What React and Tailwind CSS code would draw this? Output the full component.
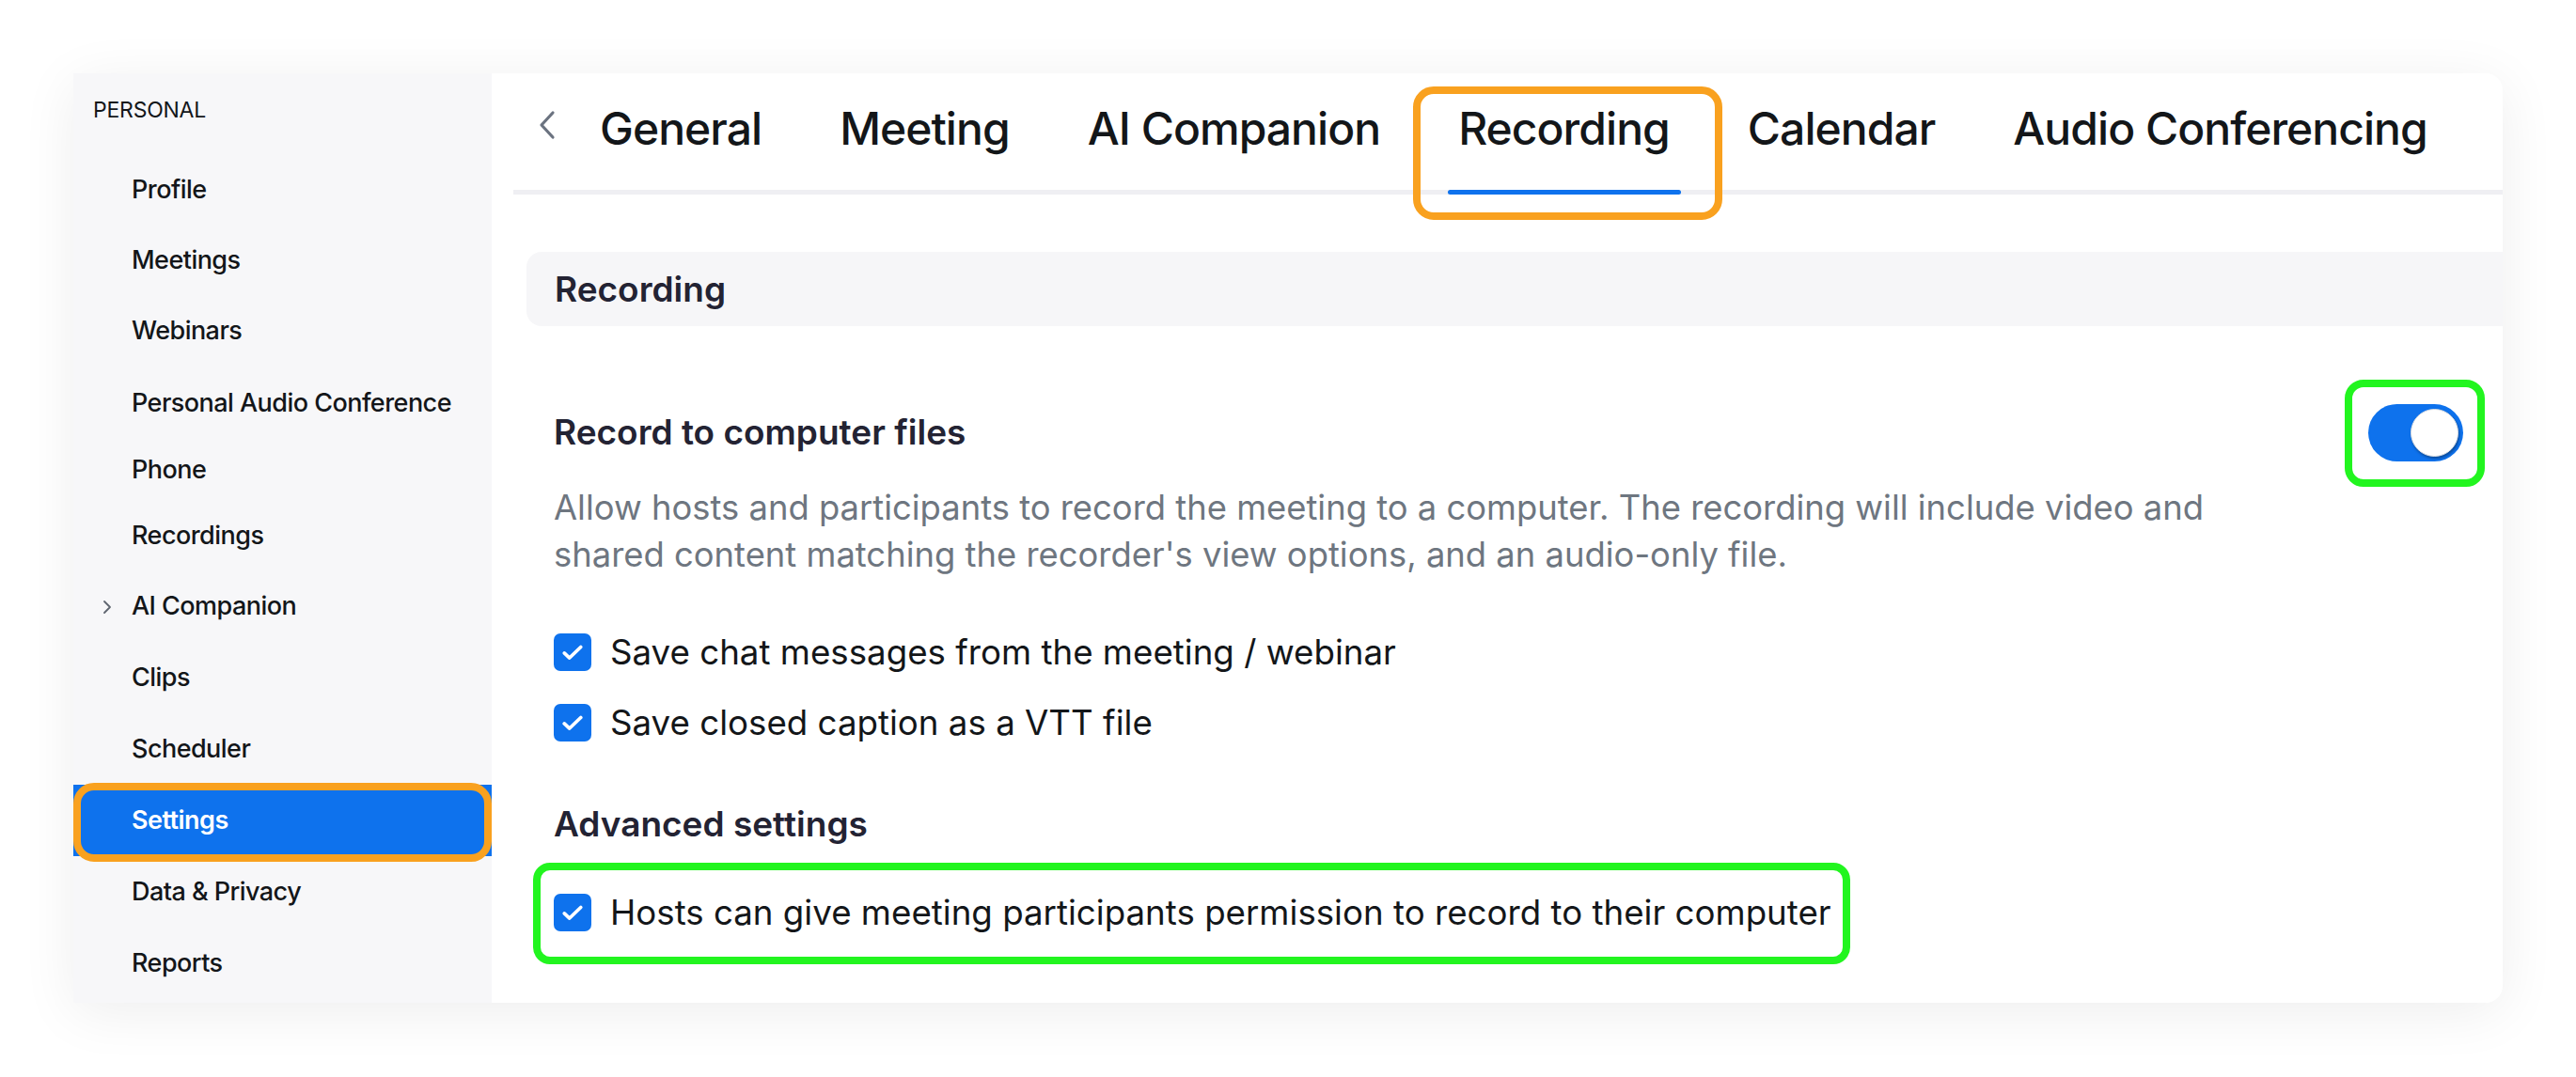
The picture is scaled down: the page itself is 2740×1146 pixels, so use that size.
import React from 'react';

const navItems = [
    { label: 'Profile', h: 'h-[75px]' },
    { label: 'Meetings', h: 'h-[75px]' },
    { label: 'Webinars', h: 'h-[75px]' },
    { label: 'Personal Audio Conference', h: 'h-[78px]' },
    { label: 'Phone', h: 'h-[65px]' },
    { label: 'Recordings', h: 'h-[75px]' },
    { label: 'AI Companion', h: 'h-[75px]' },
    { label: 'Clips', h: 'h-[76px]' },
    { label: 'Scheduler', h: 'h-[76px]' },
    { label: 'Settings', h: 'h-[76px]' },
    { label: 'Data & Privacy', h: 'h-[76px]' },
    { label: 'Reports', h: 'h-[76px]' },
];

const tabs = ['General', 'Meeting', 'AI Companion', 'Recording', 'Calendar', 'Audio Conferencing'];

const Checkbox = () => (
    <span className="flex h-[40px] w-[40px] shrink-0 items-center justify-center rounded-[7px] bg-[#0e72ed]">
        <svg width="24" height="19" viewBox="0 0 26 20" fill="none" stroke="#fff" strokeWidth="4" strokeLinecap="round" strokeLinejoin="round">
            <path d="M3.5 10.5 L9.5 16 L22.5 3.5" />
        </svg>
    </span>
);

const App = () => {
    return (
        <div className="min-h-screen bg-white pl-[78px] pt-[78px] font-['Inter',sans-serif] text-[#131619]">
            <div className="flex h-[989px] w-[2584px] overflow-hidden rounded-r-[18px] bg-white shadow-[0_10px_60px_rgba(0,0,0,0.07)]">
                {/* sidebar */}
                <aside className="flex w-[445px] shrink-0 flex-col bg-[#f7f7f9]">
                    <div className="pl-[21px] pt-[25px] text-[23px] leading-[28px] tracking-[-0.01em]">PERSONAL</div>
                    <nav className="mt-[34px] flex flex-col">
                        {navItems.map(({ label, h }) => {
                            const active = label === 'Settings';
                            return (
                                <div
                                    key={label}
                                    className={`relative flex ${h} items-center pl-[31px] text-[27px] tracking-[-0.02em] ${active ? 'bg-[#0e72ed] font-semibold text-white' : 'font-medium'}`}
                                >
                                    <span className="flex w-[31px] shrink-0 items-center">
                                        {label === 'AI Companion' && (
                                            <svg width="10" height="16" viewBox="0 0 10 16" fill="none" stroke="#5f6570" strokeWidth="1.8" strokeLinecap="round" strokeLinejoin="round">
                                                <path d="M2 2 L8 8 L2 14" />
                                            </svg>
                                        )}
                                    </span>
                                    <span>{label}</span>
                                    {active && (
                                        <span className="absolute inset-x-0 top-[-2px] bottom-[-6px] rounded-[22px] border-[8px] border-[#f9a11f]" />
                                    )}
                                </div>
                            );
                        })}
                    </nav>
                </aside>

                {/* main */}
                <main className="flex min-w-0 flex-1 flex-col pl-[23px]">
                    <div className="flex h-[129px] items-stretch border-b-[5px] border-[#efeff3]">
                        <div className="ml-[25px] mr-[46px] flex items-center pb-[14px]">
                            <svg width="21" height="32" viewBox="0 0 21 32" fill="none" stroke="#6b7380" strokeWidth="3.2" strokeLinecap="round" strokeLinejoin="round">
                                <path d="M17 3 L5 16 L17 29" />
                            </svg>
                        </div>
                        <div className="flex gap-[83px]">
                            {tabs.map((tab) => (
                                <div key={tab} className="relative flex items-center pb-[6px] text-[48px] font-medium tracking-[-0.02em]">
                                    {tab}
                                    {tab === 'Recording' && (
                                        <>
                                            <span className="absolute bottom-[-5px] left-[-11px] right-[-12px] h-[5px] rounded-full bg-[#0e72ed]" />
                                            <span className="absolute top-[14px] bottom-[-32px] left-[-48px] right-[-56px] rounded-[22px] border-[8px] border-[#f9a11f]" />
                                        </>
                                    )}
                                </div>
                            ))}
                        </div>
                    </div>

                    <div className="flex flex-col pl-[14px]">
                        <div className="mt-[61px] flex h-[79px] items-center rounded-l-[16px] bg-[#f6f6f8] pl-[30px] text-[37px] font-semibold text-[#232333]">
                            Recording
                        </div>

                        <div className="flex flex-col pl-[29px] pr-[42px]">
                            <div className="mt-[88px] flex h-[50px] items-center justify-between">
                                <h3 className="text-[37px] font-semibold leading-[50px] text-[#232333]">Record to computer files</h3>
                                <div className="relative">
                                    <div className="flex h-[61px] w-[101px] items-center justify-end rounded-full bg-[#0e72ed] pr-[5px]">
                                        <span className="h-[51px] w-[51px] rounded-full border border-[#d9dde3] bg-white shadow-[1px_2px_3px_rgba(0,0,0,0.35)]" />
                                    </div>
                                    <span className="absolute top-[-26px] bottom-[-27px] left-[-25px] right-[-23px] rounded-[20px] border-[8px] border-[#22f51f]" />
                                </div>
                            </div>
                            <p className="mt-[30px] max-w-[1820px] text-[36.4px] leading-[50px] text-[#6e7680]">
                                Allow hosts and participants to record the meeting to a computer. The recording will include video and shared content matching the recorder's view options, and an audio-only file.
                            </p>

                            <div className="mt-[54px] flex flex-col gap-[25px]">
                                <label className="flex h-[50px] items-center gap-[20px] text-[36.7px]">
                                    <Checkbox />
                                    Save chat messages from the meeting / webinar
                                </label>
                                <label className="flex h-[50px] items-center gap-[20px] text-[36.7px]">
                                    <Checkbox />
                                    Save closed caption as a VTT file
                                </label>
                            </div>

                            <h4 className="mt-[58px] text-[37px] font-semibold leading-[50px] text-[#232333]">Advanced settings</h4>

                            <div className="relative mt-[44px] flex h-[50px] w-fit items-center gap-[20px] text-[36.7px]">
                                <Checkbox />
                                Hosts can give meeting participants permission to record to their computer
                                <span className="absolute top-[-28px] bottom-[-30px] left-[-22px] right-[-20px] rounded-[18px] border-[8px] border-[#22f51f]" />
                            </div>
                        </div>
                    </div>
                </main>
            </div>
        </div>
    );
};

export default App;
